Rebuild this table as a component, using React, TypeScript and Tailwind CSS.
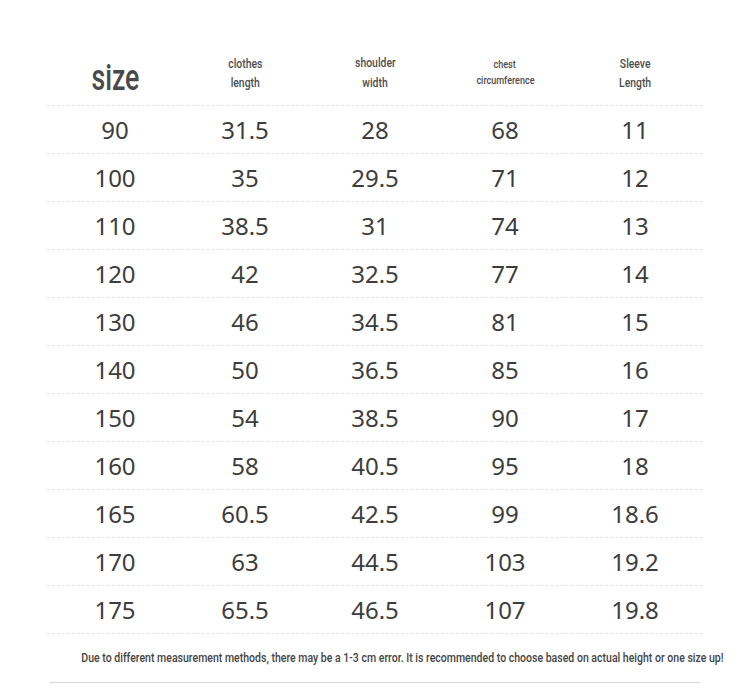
import React from 'react';

const HEADERS: { lines: string[]; size: string }[] = [
  { lines: ['clothes', 'length'], size: 'text-[13px] leading-[19px] scale-x-[0.8]' },
  { lines: ['shoulder', 'width'], size: 'text-[13px] leading-[20px] scale-x-[0.8]' },
  { lines: ['chest', 'circumference'], size: 'text-[11px] leading-[16px] scale-x-[0.82]' },
  { lines: ['Sleeve', 'Length'], size: 'text-[13px] leading-[19px] scale-x-[0.8]' },
];

const ROWS: string[][] = [
  ['90', '31.5', '28', '68', '11'],
  ['100', '35', '29.5', '71', '12'],
  ['110', '38.5', '31', '74', '13'],
  ['120', '42', '32.5', '77', '14'],
  ['130', '46', '34.5', '81', '15'],
  ['140', '50', '36.5', '85', '16'],
  ['150', '54', '38.5', '90', '17'],
  ['160', '58', '40.5', '95', '18'],
  ['165', '60.5', '42.5', '99', '18.6'],
  ['170', '63', '44.5', '103', '19.2'],
  ['175', '65.5', '46.5', '107', '19.8'],
];

const narrow = "font-['Roboto',sans-serif] inline-block whitespace-nowrap";

const App = () => {
  return (
    <div className="w-[750px] h-[684px] bg-white overflow-hidden pt-[42px]">
      <div className="mx-[47px] w-[656px]">
        <div className="flex h-[64px] border-b border-dashed border-[#e2e2e2] px-[3px]">
          <div className="w-[130px] flex items-center justify-center">
            <span className={`${narrow} text-[36px] font-medium text-[#4a4a4a] scale-x-[0.74] mt-[8px]`}>size</span>
          </div>
          {HEADERS.map((h) => (
            <div key={h.lines[0]} className="w-[130px] flex flex-col items-center justify-center pb-[2px]">
              {h.lines.map((l) => (
                <span key={l} className={`${narrow} ${h.size} font-medium text-[#4d4d4d]`}>{l}</span>
              ))}
            </div>
          ))}
        </div>
        {ROWS.map((row) => (
          <div key={row[0]} className="flex h-[48px] border-b border-dashed border-[#e2e2e2] px-[3px]">
            {row.map((v, i) => (
              <div key={i} className="w-[130px] flex items-center justify-center font-['Noto_Sans',sans-serif] text-[24px] text-[#3d3d3d]">
                {v}
              </div>
            ))}
          </div>
        ))}
      </div>
      <div className="mx-[50px] w-[650px] h-[49px] border-b border-[#d6d6d6] flex items-center justify-center">
        <p className={`${narrow} text-[13px] font-medium text-[#444] scale-x-[0.81] ml-[55px]`}>
          Due to different measurement methods, there may be a 1-3 cm error. It is recommended to choose based on actual height or one size up!
        </p>
      </div>
    </div>
  );
};

export default App;
